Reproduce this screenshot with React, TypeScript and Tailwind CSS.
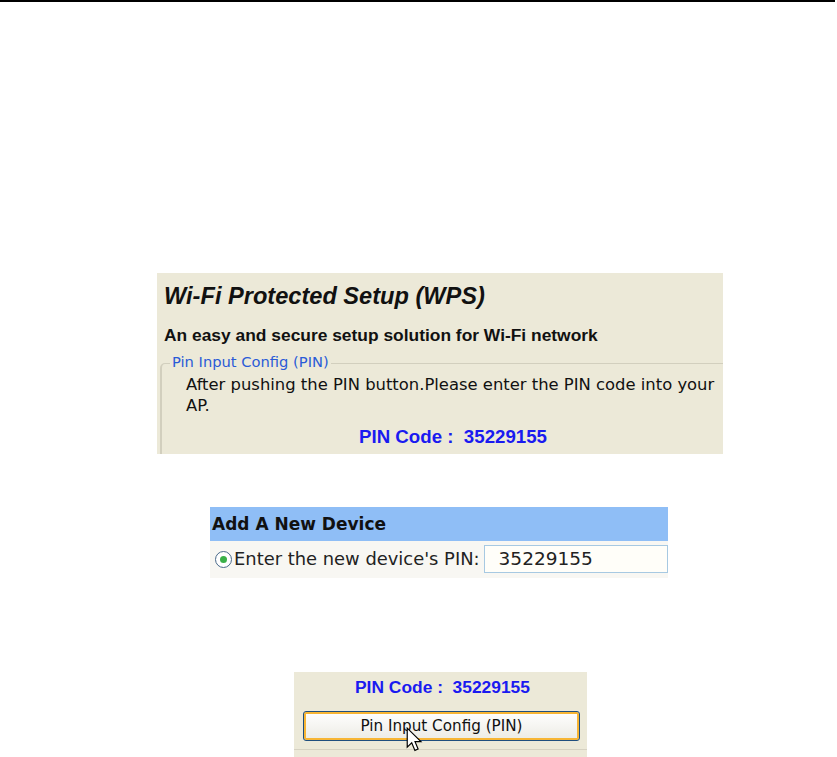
import React from "react";

const tahoma = { fontFamily: '"DejaVu Sans", Verdana, sans-serif' };

export default function App() {
  return (
    <div className="relative w-[837px] h-[757px] bg-white overflow-hidden" style={{ fontFamily: '"Liberation Sans", Arial, sans-serif' }}>
      <div className="h-[2px] w-[835px] bg-black" />

      {/* Block 1 */}
      <div className="mt-[271px] ml-[157px] w-[566px] h-[181px] bg-[#ECE9D8] pl-[7px] pt-[9px] overflow-hidden">
        <div className="text-[23.6px] leading-[28px] font-bold italic text-[#111]">Wi-Fi Protected Setup (WPS)</div>
        <div className="mt-[14px] text-[17.4px] leading-[22px] font-bold text-[#111]">An easy and secure setup solution for Wi-Fi network</div>
        <div className="relative mt-[17px] -ml-[4px] w-[600px] h-[100px] border-l-2 border-t border-[#D2CFBE] rounded-tl-[5px]">
          <div className="absolute -top-[11px] left-[8px] px-[2px] bg-[#ECE9D8] leading-[18px] text-[#2A5BD7]" style={{ ...tahoma, fontSize: "14.7px" }}>
            Pin Input Config (PIN)
          </div>
          <div className="pl-[24px] pt-[10px] w-[580px] text-[#111] leading-[21px] whitespace-nowrap" style={{ ...tahoma, fontSize: "16.4px" }}>
            After pushing the PIN button.Please enter the PIN code into your
            <br />
            AP.
          </div>
          <div className="mt-[10px] pl-[197px] text-[18.7px] leading-[22px] font-bold text-[#1A1AF0]">
            PIN Code :&nbsp; 35229155
          </div>
        </div>
      </div>

      {/* Block 2 */}
      <div className="mt-[53px] ml-[210px] w-[458px] h-[71px] bg-[#F8F7F3]">
        <div className="h-[34px] bg-[#8FBEF6] pl-[2px] pt-[7px] leading-[20px] font-bold text-[#111]" style={{ ...tahoma, fontSize: "17px" }}>
          Add A New Device
        </div>
        <div className="flex items-center h-[36px] pl-[5px]">
          <div className="w-[17px] h-[17px] shrink-0 rounded-full border border-[#4A6A8A] bg-white flex items-center justify-center">
            <div className="w-[7px] h-[7px] rounded-full bg-[#3AB048]" />
          </div>
          <span className="ml-[2px] text-[#222] whitespace-nowrap" style={{ ...tahoma, fontSize: "17.9px" }}>Enter the new device's PIN:</span>
          <div className="ml-[4px] w-[184px] shrink-0 h-[28px] border border-[#A7C9E2] bg-[#FFFEF9] pl-[14px] flex items-center text-[#222]" style={{ ...tahoma, fontSize: "18.5px" }}>
            35229155
          </div>
        </div>
      </div>

      {/* Block 3 */}
      <div className="relative mt-[94px] ml-[294px] w-[293px] h-[85px] bg-[#ECE9D8]">
        <div className="pt-[5px] pl-[61px] text-[17.4px] leading-[20px] font-bold text-[#1A1AF0]">
          PIN Code :&nbsp; 35229155
        </div>
        <div className="mt-[14px] ml-[9px] w-[277px] h-[30px] rounded-[3px] border border-[#1F4E7E] bg-gradient-to-b from-white to-[#ECEBE4] shadow-[inset_0_0_0_2px_#F7B534] flex items-center justify-center text-[#111]" style={{ ...tahoma, fontSize: "15.2px" }}>
          Pin Input Config (PIN)
        </div>
        <div className="mt-[8px] h-[1px] bg-[#D6D2C2]" />
        <svg className="absolute left-[112px] top-[55px]" width="19" height="26" viewBox="0 0 16 22">
          <path d="M1 1 L1 17 L4.8 13.4 L7.5 19.8 L10.2 18.6 L7.6 12.4 L12.6 12.4 Z" fill="white" stroke="black" strokeWidth="1" strokeLinejoin="miter" />
        </svg>
      </div>
    </div>
  );
}
